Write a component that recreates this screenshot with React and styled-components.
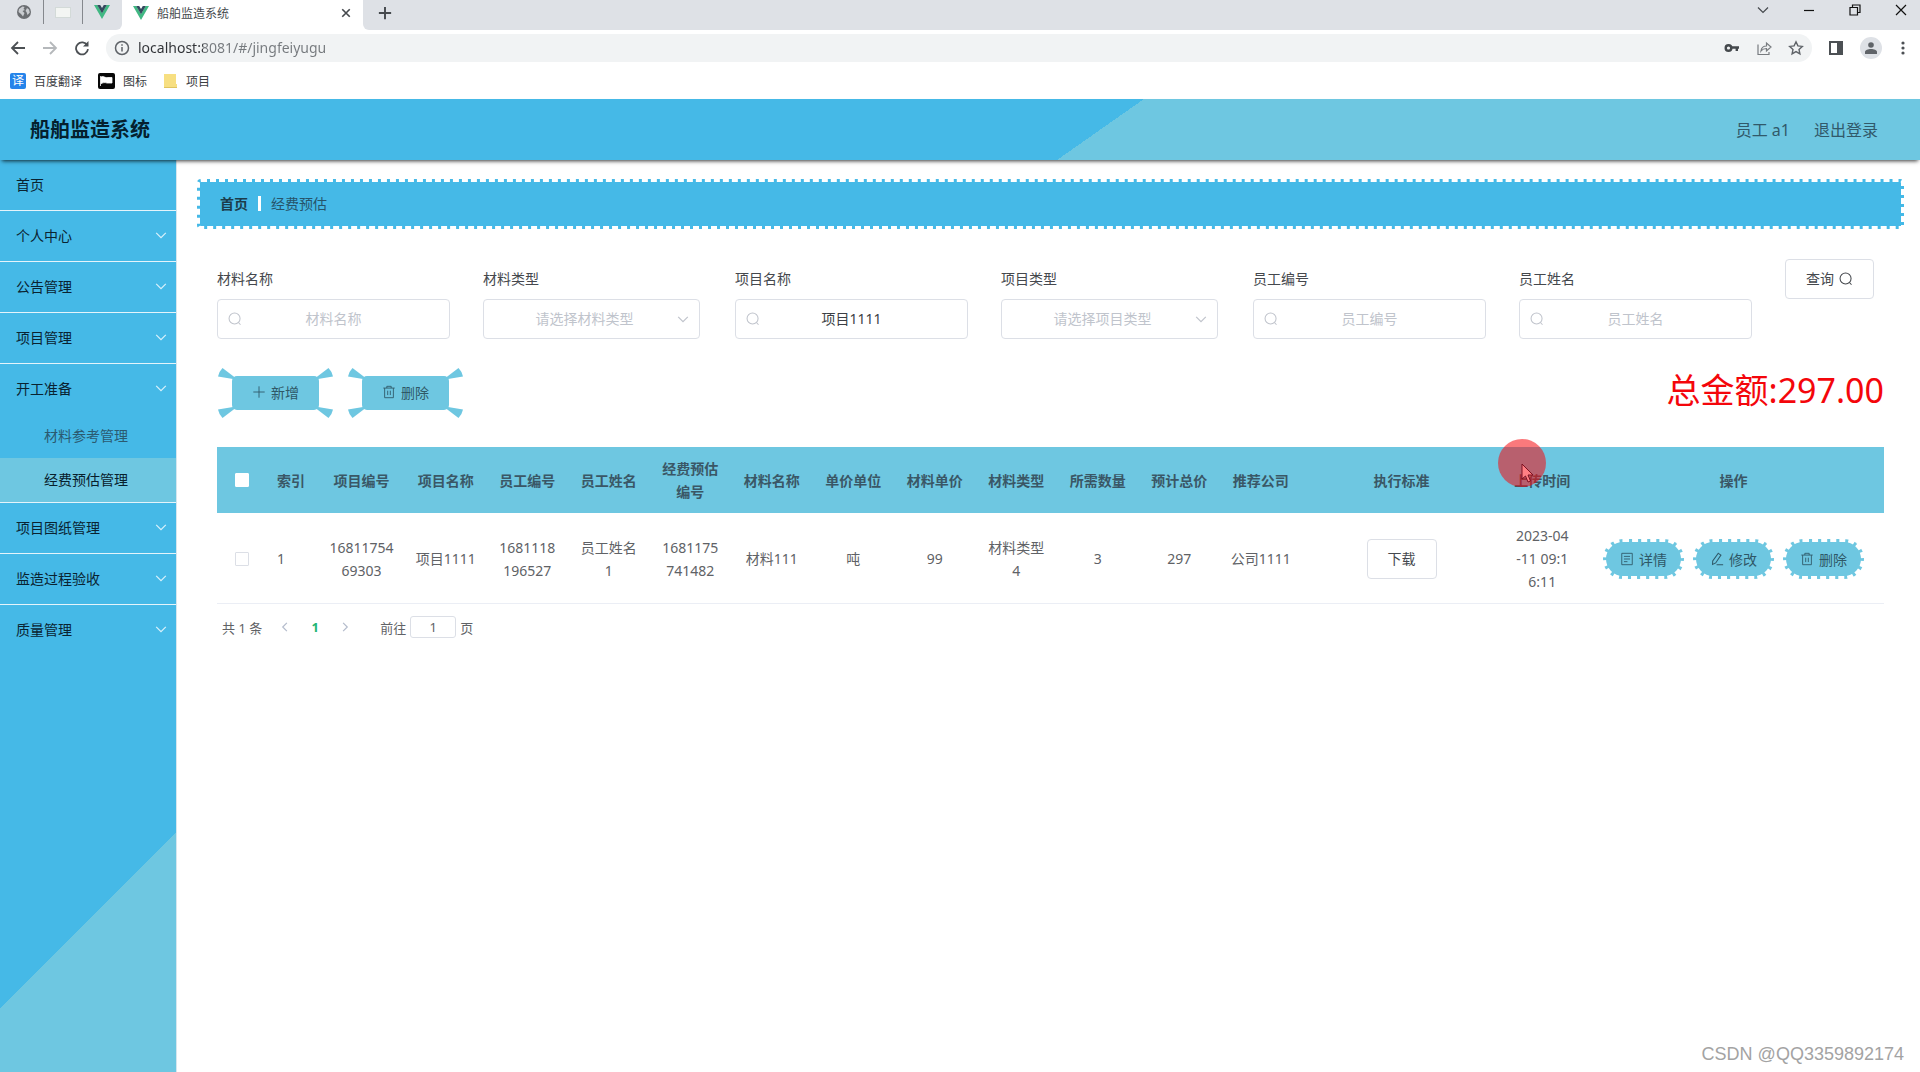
import React from "react";
import styled, { createGlobalStyle } from "styled-components";

const BLUE = "#45b9e7";
const TEAL = "#6ec7e1";
const SANS = '"Noto Sans", "Noto Sans CJK SC", sans-serif';

const Global = createGlobalStyle`
  * { box-sizing: border-box; }
  body { margin: 0; background: #fff; font-family: ${SANS}; font-size: 14px; color: #606266; }
  button, input, select { font-family: inherit; font-size: inherit; margin: 0; }
  button { cursor: pointer; }
  a { color: inherit; text-decoration: none; }
  svg { display: block; flex: none; }
`;

/* ---------- icons ---------- */

const Icon = ({ size = 16, width = 1, children, viewBox = "0 0 16 16", ...rest }) => (
  <svg width={size} height={size} viewBox={viewBox} fill="none" stroke="currentColor" strokeWidth={width} aria-hidden="true" {...rest}>
    {children}
  </svg>
);
const Chevron = () => <Icon size={14} width={1.4}><path d="M2.500 5.500 8 11l5.500-5.500" /></Icon>;
const ChevronLeft = () => <Icon size={12} width={1.6}><path d="M10.500 2.500 5 8l5.500 5.500" /></Icon>;
const ChevronRight = () => <Icon size={12} width={1.6}><path d="M5.500 2.500 11 8l-5.500 5.500" /></Icon>;
const Search = () => <Icon size={14} width={1.2}><circle cx="7.500" cy="7.500" r="6.300" /><path d="m12 12 2.300 2.600" /></Icon>;
const Plus = () => <Icon size={14}><path d="M8 1.500v13M1.500 8h13" /></Icon>;
const Trash = () => (
  <Icon size={14}><path d="M1.500 3.500h13M5.500 3.500v-2h5v2M3 3.500v11h10v-11M6.500 6.500v5M9.500 6.500v5" /></Icon>
);
const Doc = () => <Icon size={14}><path d="M2 1.500h12v13H2zM4.500 5h7M4.500 8h7M4.500 11h4" /></Icon>;
const Edit = () => (
  <Icon size={14} width={1.2}><path d="M9.500 1.500 12.500 3.500 6.500 12.500l-3.600 1.700.2-4zM7.500 14.500h7.500" /></Icon>
);
const Vue = () => (
  <svg width="16" height="14" viewBox="0 0 16 14" aria-hidden="true">
    <path d="M0 0h3.300L8 8l4.700-8H16L8 14z" fill="#41b883" />
    <path d="M3.200 0h3L8 3.100 9.800 0h3L8 8.300z" fill="#34495e" />
  </svg>
);
const Globe = () => (
  <svg width="16" height="16" viewBox="0 0 16 16" aria-hidden="true">
    <circle cx="8" cy="8" r="7" fill="#6b6e72" />
    <path d="M3 5 6.500 2.500 8.500 3 7.500 5 9 6 6.500 7 8.500 9 7 12.500 5 10 2.500 8zM11 4l2 1.500.8 3-2.300 2.500-1-3L9.500 7z" fill="#c9ccd0" />
  </svg>
);

/* ---------- browser chrome ---------- */

const Browser = styled.div`
  background: #fff;
`;
const TabStrip = styled.div`
  display: flex;
  height: 30px;
  background: #fff;
`;
const PinnedTabs = styled.div`
  display: flex;
  border-radius: 0 0 6px 0;
  background: #dee1e6;
`;
const StripRest = styled.div`
  display: flex;
  flex: 1;
  border-radius: 0 0 0 6px;
  background: #dee1e6;
`;
const PinnedTab = styled.button`
  display: flex;
  align-items: center;
  justify-content: center;
  width: 39px;
  height: 24px;
  padding: 0;
  border: 0;
  border-right: 1px solid ${(p) => (p.$last ? "transparent" : "#85888d")};
  background: transparent;
  &:first-child { width: 44px; padding-left: 4px; }
`;
const BlankPage = styled.span`
  width: 16px;
  height: 11px;
  border: 1px solid #d3dad8;
  background: #f3f5f3;
`;
const ActiveTab = styled.div`
  display: flex;
  align-items: center;
  gap: 8px;
  width: 241px;
  height: 30px;
  padding: 0 12px 4px 11px;
  background: #fff;
  color: #45494d;
  font-size: 12px;
`;
const TabTitle = styled.span`
  flex: 1;
`;
const PlainButton = styled.button`
  display: flex;
  align-items: center;
  justify-content: center;
  padding: 0;
  border: 0;
  background: transparent;
  color: ${(p) => p.$color || "#45494d"};
`;
const NewTab = styled(PlainButton)`
  width: 24px;
  height: 26px;
  margin-left: 10px;
`;
const WindowButtons = styled.div`
  display: flex;
  align-items: center;
  gap: 30px;
  height: 20px;
  margin-left: auto;
  padding-right: 11px;
`;
const Toolbar = styled.div`
  display: flex;
  align-items: center;
  height: 36px;
  padding: 0 12px 0 10px;
  gap: 16px;
`;
const Nav = styled.div`
  display: flex;
  gap: 16px;
`;
const Omnibox = styled.div`
  display: flex;
  flex: 1;
  align-items: center;
  gap: 16px;
  height: 28px;
  padding: 0 8px;
  border-radius: 14px;
  background: #f1f3f4;
  color: #5f6368;
`;
const UrlInput = styled.input`
  flex: 1;
  min-width: 0;
  margin-left: -8px;
  padding: 0 0 2px;
  border: 0;
  outline: 0;
  font-size: 14px;
  color: transparent;
  background: linear-gradient(to right, #303236 65px, #75797d 65px);
  -webkit-background-clip: text;
  background-clip: text;
`;
const Avatar = styled.span`
  display: flex;
  align-items: center;
  justify-content: center;
  width: 22px;
  height: 22px;
  border-radius: 50%;
  background: #dee1e6;
`;
const Bookmarks = styled.nav`
  display: flex;
  align-items: center;
  gap: 16px;
  height: 33px;
  padding: 0 10px 4px;
  color: #3c4043;
  font-size: 12px;
`;
const Bookmark = styled.a`
  display: flex;
  align-items: center;
  gap: 8px;
`;
const Badge = styled.span`
  display: flex;
  align-items: center;
  justify-content: center;
  width: 16px;
  height: 16px;
  border-radius: 2px;
  background: #2584ea;
  color: #fff;
  font-size: 12px;
  line-height: 16px;
`;

const BrowserFrame = () => (
  <Browser>
    <TabStrip>
      <PinnedTabs>
        <PinnedTab aria-label="网页"><Globe /></PinnedTab>
        <PinnedTab aria-label="空白页"><BlankPage /></PinnedTab>
        <PinnedTab aria-label="Vue" $last><Vue /></PinnedTab>
      </PinnedTabs>
      <ActiveTab>
        <Vue />
        <TabTitle>船舶监造系统</TabTitle>
        <PlainButton aria-label="关闭标签页"><Icon size={10} width={2.600}><path d="m2 2 12 12M14 2 2 14" /></Icon></PlainButton>
      </ActiveTab>
      <StripRest>
        <NewTab aria-label="新标签页"><Icon size={14} width={2.200}><path d="M8 1v14M1 8h14" /></Icon></NewTab>
        <WindowButtons>
          <PlainButton aria-label="搜索标签页"><Icon width={1.200}><path d="M3 5.500 8 10.500l5-5" /></Icon></PlainButton>
          <PlainButton aria-label="最小化" $color="#111"><Icon width={1.200}><path d="M3 8.500h10" /></Icon></PlainButton>
          <PlainButton aria-label="还原" $color="#111"><Icon width={1.200}><path d="M3 5.500h7.500V13H3zM5.500 5V3H13v7.500h-2" /></Icon></PlainButton>
          <PlainButton aria-label="关闭" $color="#111"><Icon width={1.200}><path d="m3 3 10 10M13 3 3 13" /></Icon></PlainButton>
        </WindowButtons>
      </StripRest>
    </TabStrip>
    <Toolbar>
      <Nav>
        <PlainButton aria-label="后退" $color="#4c5054"><Icon width={1.800}><path d="M15 8H2M8 2 2 8l6 6" /></Icon></PlainButton>
        <PlainButton aria-label="前进" $color="#b5b8bb"><Icon width={1.800}><path d="M1 8h13M8 2l6 6-6 6" /></Icon></PlainButton>
        <PlainButton aria-label="重新加载" $color="#4c5054">
          <Icon width={1.800}><path d="M13.300 5.500A6 6 0 1 0 14 9.200" /><path d="M14.500 1v5.500H9z" fill="currentColor" stroke="none" /></Icon>
        </PlainButton>
      </Nav>
      <Omnibox>
        <Icon width={1.500}><circle cx="8" cy="8" r="6.500" /><path d="M8 7v4.500M8 4.200v1.600" /></Icon>
        <UrlInput aria-label="地址栏" defaultValue="localhost:8081/#/jingfeiyugu" spellCheck={false} />
        <PlainButton aria-label="密码">
          <Icon width={2.400}><circle cx="4.500" cy="8" r="2.800" /><path d="M7 7.500h8M12.800 7.500V11" /></Icon>
        </PlainButton>
        <PlainButton aria-label="分享" $color="#777b7f">
          <Icon width={1.200}><path d="M2 4.500V14.500h11V12M5 11c.5-4 2.500-5 5.500-5V3L15 7l-4.500 4V8.500C8 8.500 6.500 9 5 11z" /></Icon>
        </PlainButton>
        <PlainButton aria-label="收藏" $color="#5f6368">
          <Icon width={1.400}><path d="m8 1.800 1.900 4.100 4.400.5-3.300 3 .9 4.500L8 11.600l-3.900 2.300.9-4.500-3.300-3 4.400-.5z" /></Icon>
        </PlainButton>
      </Omnibox>
      <PlainButton aria-label="侧边栏" $color="#4c5054">
        <Icon width={2}><path d="M2 2h12v12H2z" /><path d="M10 2h4v12h-4z" fill="currentColor" /></Icon>
      </PlainButton>
      <PlainButton aria-label="用户" $color="#5f6368">
        <Avatar>
          <svg width="12" height="12" viewBox="0 0 12 12" fill="currentColor"><circle cx="6" cy="3" r="2.800" /><path d="M0 12V10c0-2 3-3 6-3s6 1 6 3v2z" /></svg>
        </Avatar>
      </PlainButton>
      <PlainButton aria-label="菜单" $color="#4c5054">
        <svg width="10" height="14" viewBox="0 0 10 14" fill="currentColor"><circle cx="5" cy="2" r="1.600" /><circle cx="5" cy="7" r="1.600" /><circle cx="5" cy="12" r="1.600" /></svg>
      </PlainButton>
    </Toolbar>
    <Bookmarks aria-label="书签">
      <Bookmark href="#"><Badge>译</Badge>百度翻译</Bookmark>
      <Bookmark href="#">
        <svg width="17" height="16" viewBox="0 0 17 16" aria-hidden="true"><rect width="17" height="16" rx="2" fill="#080808" /><path d="M2.500 3v10M3 4c3-1.500 4 1.500 7 .5h4V10H9c-3-1-4 0-6 .5z" fill="#fff" stroke="#fff" strokeWidth=".8" /></svg>
        图标
      </Bookmark>
      <Bookmark href="#">
        <svg width="15" height="14" viewBox="0 0 15 14" aria-hidden="true"><path d="M1 0h12v10h1v4H1z" fill="#f7df81" /><path d="M1 13h13v1H1z" fill="#dfc45f" /></svg>
        项目
      </Bookmark>
    </Bookmarks>
  </Browser>
);

/* ---------- application ---------- */

const Page = styled.div`
  position: relative;
  display: flex;
  flex-direction: column;
  min-height: 100vh;
`;
const Header = styled.header`
  z-index: 1;
  display: flex;
  align-items: center;
  justify-content: space-between;
  height: 61px;
  padding: 0 42px 2px 30px;
  background: linear-gradient(145deg, ${BLUE} 57%, ${TEAL} 57%);
  box-shadow: 0 3px 4px -2px rgba(0, 0, 0, 0.8);
`;
const Title = styled.h1`
  margin: 0;
  color: #04202e;
  font-size: 20px;
`;
const Account = styled.div`
  display: flex;
  gap: 24px;
  color: #31596a;
  font-size: 16px;
`;
const Body = styled.div`
  display: flex;
  flex: 1;
`;
const Sidebar = styled.nav`
  flex: none;
  width: 177px;
  border-right: 1px solid #d5e6ee;
  background: linear-gradient(135deg, ${BLUE} 78%, ${TEAL} 78%);
`;
const Menu = styled.ul`
  margin: 0;
  padding: 0;
  list-style: none;
`;
const MenuGroup = styled.li`
  border-bottom: 1px solid #e4f4fb;
  &:last-child { border-bottom: 0; }
`;
const MenuLink = styled.a`
  display: flex;
  align-items: center;
  justify-content: space-between;
  height: 50px;
  padding: 0 8px 2px 16px;
  color: #0a2331;
  svg { color: #d9f1fb; }
`;
const SubLink = styled.a`
  display: flex;
  align-items: center;
  height: 44px;
  padding: 0 0 2px 44px;
  color: ${(p) => (p.$active ? "#08202c" : "#2b5a70")};
  background: ${(p) => (p.$active ? TEAL : "transparent")};
`;
const Main = styled.main`
  flex: 1;
  min-width: 0;
  padding: 19px 16px 19px 20px;
`;
const Breadcrumb = styled.nav`
  display: flex;
  align-items: center;
  gap: 10px;
  height: 50px;
  padding: 0 20px 2px;
  border: 3px dashed #fff;
  border-radius: 4px;
  background: ${BLUE};
  color: #27546a;
`;
const Crumb = styled.a`
  color: ${(p) => (p.$home ? "#1c3c4b" : "inherit")};
  font-weight: ${(p) => (p.$home ? 700 : 400)};
`;
const Bar = styled.span`
  width: 3px;
  height: 15px;
  background: #fff;
`;
const Content = styled.div`
  display: flex;
  flex-direction: column;
  padding: 30px 20px;
`;
const SearchForm = styled.form`
  display: flex;
  flex-wrap: wrap;
  align-items: flex-start;
  gap: 0 33px;
`;
const Field = styled.div`
  width: ${(p) => (p.$select ? 219 : 233)}px;
  padding-right: ${(p) => (p.$select ? 2 : 0)}px;
`;
const Label = styled.label`
  display: block;
  color: #45484d;
  line-height: 40px;
`;
const Control = styled.div`
  position: relative;
  color: #c0c4cc;
  svg {
    position: absolute;
    top: 13px;
    ${(p) => (p.$end ? "right: 10px;" : "left: 11px;")}
    pointer-events: none;
  }
`;
const TextInput = styled.input`
  width: 100%;
  height: 40px;
  padding: 0 30px 2px;
  border: 1px solid #dcdfe6;
  border-radius: 4px;
  background: #fff;
  color: #3c3f44;
  text-align: center;
  outline: 0;
  &::placeholder { color: #c0c4cc; opacity: 1; }
`;
const Select = styled.select`
  width: 100%;
  height: 40px;
  padding: 0 30px 2px 16px;
  border: 1px solid #dcdfe6;
  border-radius: 4px;
  background: #fff;
  color: #c0c4cc;
  appearance: none;
  text-align: center;
  text-align-last: center;
  outline: 0;
`;
const WhiteButton = styled.button`
  display: inline-flex;
  align-items: center;
  gap: 5px;
  height: 40px;
  padding: 0 20px;
  border: 1px solid #dcdfe6;
  border-radius: 4px;
  background: #fff;
  color: #45484d;
  line-height: 20px;
`;
const Actions = styled.div`
  display: flex;
  align-items: center;
  justify-content: space-between;
  margin: 29px 0;
  height: 50px;
`;
const ButtonRow = styled.div`
  display: flex;
  justify-content: ${(p) => p.$justify || "flex-start"};
  gap: ${(p) => p.$gap}px;
`;
const RibbonButton = styled.button`
  position: relative;
  padding: 8px 15px;
  border: 0;
  background: transparent;
  color: #2f5867;
`;
const Face = styled.span`
  display: flex;
  align-items: center;
  gap: 5px;
  height: 34px;
  padding: 0 20px 2px;
  border-radius: 5px;
  background: ${TEAL};
`;
const Wedge = styled.svg`
  position: absolute;
  ${(p) => (p.$bottom ? "bottom: 0;" : "top: 0;")}
  ${(p) => (p.$right ? "right: 0;" : "left: 0;")}
  transform: scale(${(p) => (p.$right ? -1 : 1)}, ${(p) => (p.$bottom ? -1 : 1)});
`;
const CORNERS = [[false, false], [true, false], [false, true], [true, true]];
const CornerButton = ({ children }) => (
  <RibbonButton type="button">
    {CORNERS.map(([right, bottom]) => (
      <Wedge key={`${right}-${bottom}`} $right={right} $bottom={bottom} width="18" height="12" viewBox="0 0 18 12" aria-hidden="true">
        <path d="M5.500 0 18 9.500 16 11 1 8.500Q2 3.500 5.500 0z" fill={TEAL} />
      </Wedge>
    ))}
    <Face>{children}</Face>
  </RibbonButton>
);
const Total = styled.p`
  margin: 0 0 6px;
  color: #f4060b;
  font-size: 34px;
  line-height: 40px;
`;
const Table = styled.table`
  width: 100%;
  border-collapse: collapse;
  table-layout: fixed;
  line-height: 23px;
  text-align: center;
`;
const Col = styled.col`
  width: ${(p) => (p.$w ? `${p.$w}px` : "auto")};
`;
const Th = styled.th`
  position: relative;
  height: 66px;
  padding: 10px;
  background: ${TEAL};
  color: #3a5766;
  font-weight: 700;
  text-align: ${(p) => p.$align || "center"};
`;
const Td = styled.td`
  padding: 11px 10px 10px;
  border-bottom: 1px solid #ebeef5;
  text-align: ${(p) => p.$align || "center"};
  word-break: break-all;
`;
const CheckBox = styled.input`
  display: block;
  width: 14px;
  height: 14px;
  margin: 0 auto;
  border: 1px solid ${(p) => (p.$head ? "#fff" : "#dcdfe6")};
  border-radius: 1px;
  background: #fff;
  appearance: none;
`;
const StampButton = styled.button`
  display: flex;
  align-items: center;
  gap: 5px;
  height: 40px;
  padding: 0 14px;
  border: 3px dashed #fff;
  border-radius: 20px;
  background: ${TEAL};
  color: #2f5867;
`;
const Pointer = styled.span`
  position: absolute;
  top: -8px;
  left: -4px;
  width: 48px;
  height: 48px;
  border-radius: 50%;
  background: rgba(246, 11, 16, 0.55);
  svg { position: absolute; top: 24px; left: 23px; }
`;
const Pagination = styled.nav`
  display: flex;
  align-items: center;
  height: 22px;
  margin-top: 12px;
  padding-left: 5px;
  gap: 16px;
  font-size: 13px;
`;
const PageButton = styled(PlainButton)`
  width: 14px;
  height: 22px;
  font-weight: 700;
`;
const Jump = styled.label`
  display: flex;
  align-items: center;
  gap: 4px;
  margin-left: 12px;
`;
const JumpInput = styled.input`
  width: 46px;
  height: 22px;
  padding: 0;
  border: 1px solid #dcdfe6;
  border-radius: 3px;
  color: #606266;
  text-align: center;
`;
const Watermark = styled.div`
  position: absolute;
  right: 16px;
  bottom: 8px;
  color: #a3a3a3;
  font-family: "Liberation Sans", sans-serif;
  font-size: 18px;
  line-height: 20px;
`;

const MENU = [
  { name: "首页" },
  { name: "个人中心", more: true },
  { name: "公告管理", more: true },
  { name: "项目管理", more: true },
  { name: "开工准备", more: true, children: ["材料参考管理", "经费预估管理"] },
  { name: "项目图纸管理", more: true },
  { name: "监造过程验收", more: true },
  { name: "质量管理", more: true },
];

const FIELDS = [
  { id: "clmc", label: "材料名称", hint: "材料名称" },
  { id: "cllx", label: "材料类型", hint: "请选择材料类型", select: true },
  { id: "xmmc", label: "项目名称", hint: "项目名称", value: "项目1111" },
  { id: "xmlx", label: "项目类型", hint: "请选择项目类型", select: true },
  { id: "ygbh", label: "员工编号", hint: "员工编号" },
  { id: "ygxm", label: "员工姓名", hint: "员工姓名" },
];

const COLUMNS = [
  { head: "项目编号", cell: "1681175469303", w: 87 },
  { head: "项目名称", cell: "项目1111" },
  { head: "员工编号", cell: "1681118196527" },
  { head: "员工姓名", cell: "员工姓名1" },
  { head: "经费预估编号", cell: "1681175741482" },
  { head: "材料名称", cell: "材料111" },
  { head: "单价单位", cell: "吨" },
  { head: "材料单价", cell: "99" },
  { head: "材料类型", cell: "材料类型4" },
  { head: "所需数量", cell: "3" },
  { head: "预计总价", cell: "297" },
  { head: "推荐公司", cell: "公司1111" },
];

const SearchField = ({ field }) => (
  <Field $select={field.select}>
    <Label htmlFor={field.id}>{field.label}</Label>
    <Control $end={field.select}>
      {field.select ? (
        <>
          <Select id={field.id} defaultValue=""><option value="">{field.hint}</option></Select>
          <Chevron />
        </>
      ) : (
        <>
          <TextInput id={field.id} placeholder={field.hint} defaultValue={field.value} />
          <Search />
        </>
      )}
    </Control>
  </Field>
);

const DataTable = () => (
  <Table>
    <colgroup>
      <Col $w={50} />
      <Col $w={51} />
      {COLUMNS.map((c) => <Col key={c.head} $w={c.w} />)}
      <Col $w={200} />
      <Col />
      <Col $w={301} />
    </colgroup>
    <thead>
      <tr>
        <Th><CheckBox $head type="checkbox" aria-label="全选" /></Th>
        <Th $align="left">索引</Th>
        {COLUMNS.map((c) => <Th key={c.head}>{c.head}</Th>)}
        <Th>执行标准</Th>
        <Th>
          上传时间
          <Pointer>
            <svg width="14" height="20" viewBox="0 0 14 20" aria-hidden="true">
              <path d="M1 1v15l3.500-3 2.500 6 2.500-1-2.500-6h5z" fill="#ff7f84" stroke="#7d1020" />
            </svg>
          </Pointer>
        </Th>
        <Th>操作</Th>
      </tr>
    </thead>
    <tbody>
      <tr>
        <Td><CheckBox type="checkbox" aria-label="选择第1行" /></Td>
        <Td $align="left">1</Td>
        {COLUMNS.map((c) => <Td key={c.head}>{c.cell}</Td>)}
        <Td><WhiteButton type="button">下载</WhiteButton></Td>
        <Td>2023-04<br />-11 09:1<br />6:11</Td>
        <Td>
          <ButtonRow $gap={9} $justify="center">
            <StampButton type="button"><Doc />详情</StampButton>
            <StampButton type="button"><Edit />修改</StampButton>
            <StampButton type="button"><Trash />删除</StampButton>
          </ButtonRow>
        </Td>
      </tr>
    </tbody>
  </Table>
);

export default function App() {
  return (
    <Page>
      <Global />
      <BrowserFrame />
      <Header>
        <Title>船舶监造系统</Title>
        <Account>
          <span>员工 a1</span>
          <a href="#">退出登录</a>
        </Account>
      </Header>
      <Body>
        <Sidebar aria-label="主菜单">
          <Menu>
            {MENU.map((m) => (
              <MenuGroup key={m.name}>
                <MenuLink href="#">{m.name}{m.more && <Chevron />}</MenuLink>
                {m.children && m.children.map((c, i) => <SubLink key={c} href="#" $active={i === 1}>{c}</SubLink>)}
              </MenuGroup>
            ))}
          </Menu>
        </Sidebar>
        <Main>
          <Breadcrumb aria-label="面包屑">
            <Crumb href="#" $home>首页</Crumb>
            <Bar />
            <Crumb href="#">经费预估</Crumb>
          </Breadcrumb>
          <Content>
            <SearchForm onSubmit={(e) => e.preventDefault()}>
              {FIELDS.map((f) => <SearchField key={f.id} field={f} />)}
              <WhiteButton type="submit">查询<Search /></WhiteButton>
            </SearchForm>
            <Actions>
              <ButtonRow $gap={13}>
                <CornerButton><Plus />新增</CornerButton>
                <CornerButton><Trash />删除</CornerButton>
              </ButtonRow>
              <Total>总金额:297.00</Total>
            </Actions>
            <DataTable />
            <Pagination aria-label="分页">
              <span>共 1 条</span>
              <PageButton aria-label="上一页" $color="#b4bccc"><ChevronLeft /></PageButton>
              <PageButton aria-current="page" $color="#22b573">1</PageButton>
              <PageButton aria-label="下一页" $color="#b4bccc"><ChevronRight /></PageButton>
              <Jump>前往<JumpInput defaultValue="1" />页</Jump>
            </Pagination>
          </Content>
        </Main>
      </Body>
      <Watermark>CSDN @QQ3359892174</Watermark>
    </Page>
  );
}
